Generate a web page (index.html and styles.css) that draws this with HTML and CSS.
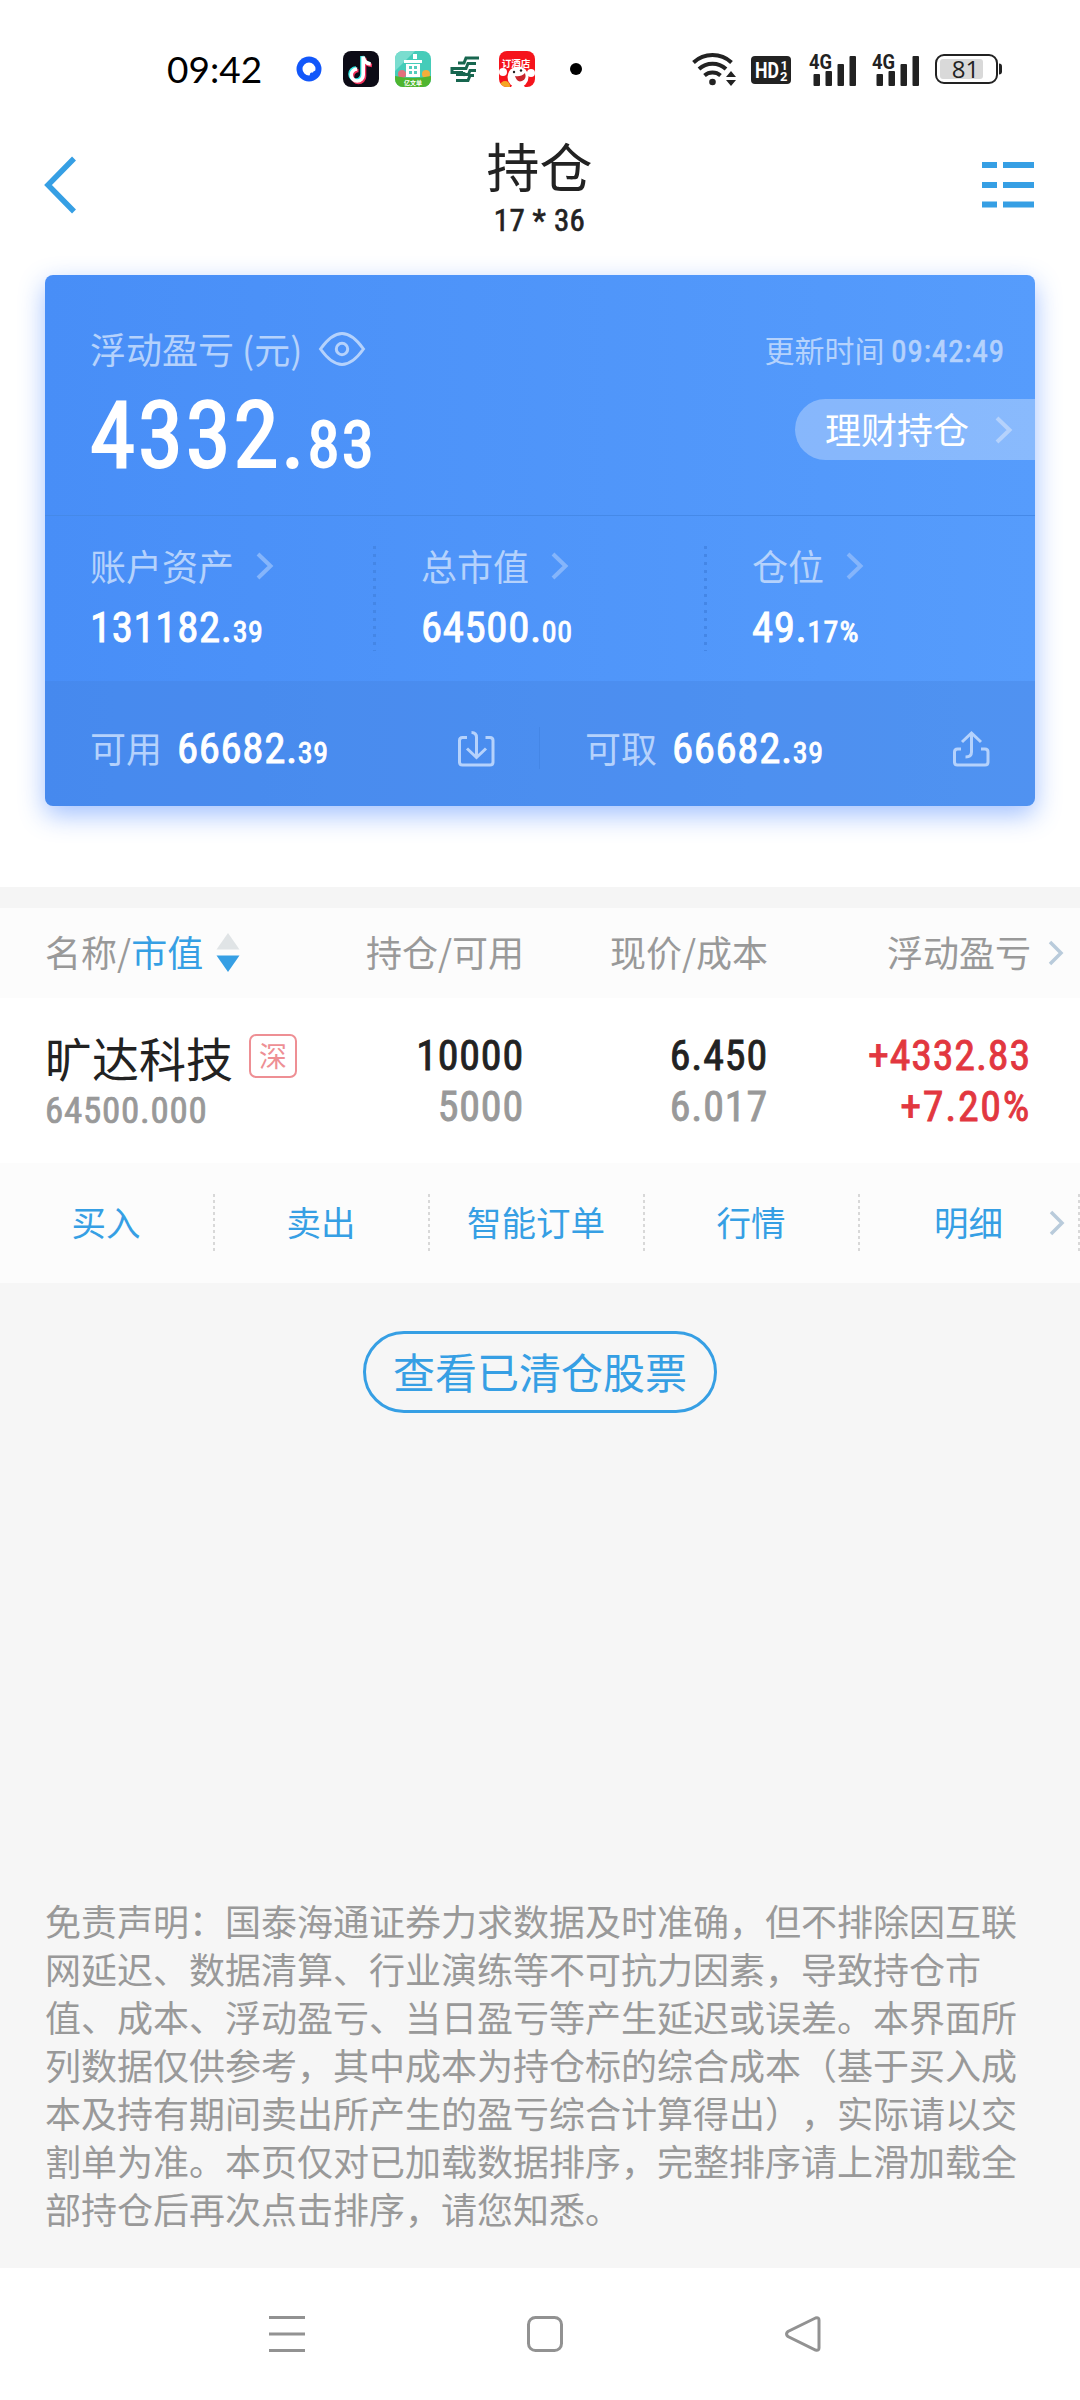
FILE: index.html
```html
<!DOCTYPE html>
<html lang="zh-CN">
<head>
    <meta charset="UTF-8">
    <meta name="viewport" content="width=device-width, initial-scale=1.0">
    <title>持仓</title>
    <link rel="stylesheet" href="styles.css">
</head>
<body>

<div class="status-bar">
    <span class="clock">09:42</span>
    <div class="app-icons">
        <svg width="26" height="26" viewBox="0 0 26 26"><circle cx="13" cy="13" r="12.500" fill="#1257fa"/><path d="M13 6.500a6.500 6.500 0 1 0 0 13q1 0 1-1.500q0-1.500 1.500-1.500h1.500q0-1.500 1.500-1.500q1 0 1-2a6.500 6.500 0 0 0-6.500-6.500z" fill="#fff"/></svg>
        <svg width="36" height="36" viewBox="0 0 36 36">
            <rect width="36" height="36" rx="8" fill="#0c0b16"/>
            <g fill="none" stroke-width="3.600">
                <path d="M19 5v18a6 6 0 1 1-6-6M19 5c.5 4.500 3 7 7.500 7.500" stroke="#2ee6e2"/>
                <path d="M21.500 7v18.500a6 6 0 1 1-6-6M21.500 7c.5 4.500 3 7 7.500 7.500" stroke="#f2315c"/>
                <path d="M20.200 5.500v18.500a6 6 0 1 1-6-6M20.200 5.500c.5 4.500 3 7 7.500 7.500" stroke="#fff"/>
            </g>
        </svg>
        <svg width="36" height="36" viewBox="0 0 36 36">
            <defs><clipPath id="tile"><rect width="36" height="36" rx="8"/></clipPath></defs>
            <g clip-path="url(#tile)">
                <rect width="36" height="36" fill="#45ccb9"/>
                <path d="M0 0h20L0 20z" fill="#7addcf"/>
                <circle cx="7" cy="23" r="4" fill="#e2707c"/>
                <circle cx="31" cy="23" r="4" fill="#f4ae3a"/>
                <path d="M9 9h18v3H9zM11 13h14v13H11zM18 3h4v5h-4z" fill="#fff"/>
                <path d="M14 15h3v3h-3zM19 15h3v3h-3zM14 20h3v3h-3zM19 20h3v3h-3z" fill="#52cdbd"/>
                <path d="M0 25q18 4 36 0v11H0z" fill="#4fb52f"/>
                <text class="tile-text" x="18" y="34" fill="#fff" font-size="6" text-anchor="middle">亿文单</text>
            </g>
        </svg>
        <svg class="post-icon" width="27" height="27" viewBox="0 0 27 27" fill="none" stroke="#17664f" stroke-width="3"><path d="M27 2H14l-2 5H6M24 7.500h-8l-2 5H0v4h11M24 14.500h-6l-1.500 4H4M12 16l-1 4M22 19.500h-4l-2 5H4"/></svg>
        <svg width="36" height="36" viewBox="0 0 36 36">
            <g clip-path="url(#tile)">
                <rect width="36" height="36" fill="#f5141c"/>
                <circle cx="4" cy="21" r="4" fill="#fff"/>
                <circle cx="32" cy="22" r="4" fill="#fff"/>
                <circle cx="19" cy="26" r="10.500" fill="#fff"/>
                <path d="M12 36q6-10 14 0z" fill="#fff"/>
                <path d="M16 25q6 1 10-3q2 6-3 8t-7-5z" fill="#c8262d"/>
                <circle cx="15" cy="21" r="1.200" fill="#222"/><circle cx="22" cy="19.500" r="1.200" fill="#222"/>
                <circle cx="6" cy="35" r="5" fill="#f5a623"/>
                <text class="tile-text" x="17" y="15.500" fill="#fff" font-size="9.500" text-anchor="middle">订酒店</text>
            </g>
        </svg>
        <span class="more-dot"></span>
    </div>
    <div class="signal-icons">
        <svg width="45" height="34" viewBox="0 0 45 34">
            <g fill="none" stroke="#222" stroke-width="4"><path d="M1.500 10.500a28 28 0 0 1 38 0"/><path d="M7 17a20 20 0 0 1 27 0"/><path d="M12.500 23.500a12.500 12.500 0 0 1 16 0"/></g>
            <circle cx="20.500" cy="30" r="3.300" fill="#222"/>
            <path d="M34 25l5-6 5 6zM34 28l5 6 5-6z" fill="#222"/>
        </svg>
        <svg class="hd" width="40" height="28" viewBox="0 0 40 28"><rect width="40" height="28" rx="4" fill="#222"/><g class="hd-text" fill="#fff"><text x="4" y="22" font-size="22" textLength="24" lengthAdjust="spacingAndGlyphs">HD</text><text x="29.500" y="13.500" font-size="13">1</text><text x="29" y="24.500" font-size="13">2</text></g></svg>
        <svg class="cell" width="46" height="33" viewBox="0 0 46 33"><text class="hd-text" x="-1" y="15.500" font-size="20" fill="#222" textLength="23" lengthAdjust="spacingAndGlyphs">4G</text><g fill="#222"><rect x="3.500" y="21" width="6.500" height="12" rx="1"/><rect x="15.500" y="18" width="6.500" height="15" rx="1"/><rect x="27.500" y="11" width="6.500" height="22" rx="1"/><rect x="39.500" y="3" width="6.500" height="30" rx="1"/></g></svg>
        <svg class="cell" width="46" height="33" viewBox="0 0 46 33"><text class="hd-text" x="-1" y="15.500" font-size="20" fill="#222" textLength="23" lengthAdjust="spacingAndGlyphs">4G</text><g fill="#222"><rect x="3.500" y="21" width="6.500" height="12" rx="1"/><rect x="15.500" y="18" width="6.500" height="15" rx="1"/><rect x="27.500" y="11" width="6.500" height="22" rx="1"/><rect x="39.500" y="3" width="6.500" height="30" rx="1"/></g></svg>
        <svg class="battery" width="68" height="30" viewBox="0 0 68 30"><rect x="5" y="5" width="43" height="20" rx="3" fill="#d9d9d9"/><rect x="1" y="1" width="61" height="28" rx="8" fill="none" stroke="#222" stroke-width="2"/><path d="M64 9.500q3 0 3 3v5q0 3-3 3z" fill="#222"/><text class="battery-text" x="30.500" y="23.500" font-size="24" text-anchor="middle" fill="#222">81</text></svg>
    </div>
</div>

<header>
    <svg class="back" width="32" height="56" viewBox="0 0 32 56"><path d="M30 1.500L4 28l26 26.500" fill="none" stroke="#369fe4" stroke-width="5.500"/></svg>
    <div class="title">
        <h1>持仓</h1>
        <p class="num">17 * 36</p>
    </div>
    <svg class="menu" width="52" height="47" viewBox="0 0 52 47" fill="#369fe4"><path d="M0 0h15v6H0zM21 0h31v6H21zM0 20h15v6H0zM21 20h31v6H21zM0 39.500h15v6H0zM21 39.500h31v6H21z"/></svg>
</header>

<section class="account">
    <div class="card">
        <div class="card-top">
            <div class="profit">
                <div class="profit-label">浮动盈亏<span class="unit">(元)</span>
                    <svg width="46" height="34" viewBox="0 0 46 34" fill="none" stroke="#b5d2fc" stroke-width="3"><path d="M1.500 17C9 6.500 16 1.500 23 1.500S37 6.500 44.500 17C37 27.500 30 32.500 23 32.500S9 27.500 1.500 17z"/><circle cx="23" cy="17" r="5.700"/></svg>
                </div>
                <div class="profit-value num">4332.<small>83</small></div>
            </div>
            <div class="card-right">
                <div class="update">更新时间 <span class="num">09:42:49</span></div>
                <a class="wealth"><span>理财持仓</span><svg width="17" height="28" viewBox="0 0 17 28"><path d="M2 2l12.500 12L2 26" fill="none" stroke="#b5d2fc" stroke-width="4"/></svg></a>
            </div>
        </div>
        <div class="stats">
            <div class="stat">
                <div class="stat-label">账户资产<svg width="17" height="28" viewBox="0 0 17 28"><path d="M2 2l12.500 12L2 26"/></svg></div>
                <div class="stat-value num">131182.<small>39</small></div>
            </div>
            <div class="stat">
                <div class="stat-label">总市值<svg width="17" height="28" viewBox="0 0 17 28"><path d="M2 2l12.500 12L2 26"/></svg></div>
                <div class="stat-value num">64500.<small>00</small></div>
            </div>
            <div class="stat">
                <div class="stat-label">仓位<svg width="17" height="28" viewBox="0 0 17 28"><path d="M2 2l12.500 12L2 26"/></svg></div>
                <div class="stat-value num">49.<small class="percent">17%</small></div>
            </div>
        </div>
        <div class="funds">
            <div class="fund">
                <span class="fund-label">可用</span>
                <span class="stat-value num">66682.<small>39</small></span>
                <svg width="37" height="36" viewBox="0 0 37 36"><path d="M9 6.500H4.500q-3 0-3 3V31q0 3 3 3H32q3 0 3-3V9.500q0-3-3-3h-4.500M13.500 1.500q5 0 5 5V26M9 17.500l9.500 9 9.500-9"/></svg>
            </div>
            <div class="fund">
                <span class="fund-label">可取</span>
                <span class="stat-value num">66682.<small>39</small></span>
                <svg width="37" height="36" viewBox="0 0 37 36"><path d="M8 18H4.500q-3 0-3 3v10q0 3 3 3H32q3 0 3-3V21q0-3-3-3h-4M12.500 26q6 0 6-5V3M9 11l9.500-9 9.500 9"/></svg>
            </div>
        </div>
    </div>
</section>

<div class="list-head">
    <div class="col-name">名称/<b>市值</b><svg width="24" height="39" viewBox="0 0 24 39"><path d="M12 0l11.500 16.500H.5z" fill="#e0e4e6"/><path d="M12 39L.5 22.500h23z" fill="#369fe4"/></svg></div>
    <div class="col-hold">持仓/可用</div>
    <div class="col-price">现价/成本</div>
    <div class="col-profit">浮动盈亏</div>
    <svg class="more" width="16" height="26" viewBox="0 0 16 26"><path d="M2 2l11 11L2 24"/></svg>
</div>

<div class="stock">
    <div class="col-name">
        <div class="stock-name">旷达科技<span class="tag">深</span></div>
        <div class="stock-amount num">64500.000</div>
    </div>
    <div class="col-hold num">10000<br><span class="gray">5000</span></div>
    <div class="col-price num">6.450<br><span class="gray">6.017</span></div>
    <div class="col-profit num red">+4332.83<br><span class="percent">+7.20%</span></div>
</div>

<div class="actions">
    <a>买入</a>
    <a>卖出</a>
    <a>智能订单</a>
    <a>行情</a>
    <a>明细</a>
    <svg class="more" width="16" height="26" viewBox="0 0 16 26"><path d="M2 2l11 11L2 24"/></svg>
</div>

<button class="cleared-btn">查看已清仓股票</button>

<p class="disclaimer">免责声明：国泰海通证券力求数据及时准确，但不排除因互联<br>网延迟、数据清算、行业演练等不可抗力因素，导致持仓市<br>值、成本、浮动盈亏、当日盈亏等产生延迟或误差。本界面所<br>列数据仅供参考，其中成本为持仓标的综合成本（基于买入成<br>本及持有期间卖出所产生的盈亏综合计算得出），实际请以交<br>割单为准。本页仅对已加载数据排序，完整排序请上滑加载全<br>部持仓后再次点击排序，请您知悉。</p>

<nav class="system-nav">
    <svg width="36" height="36" viewBox="0 0 36 36"><path d="M0 1.500h36M0 18h36M0 34.500h36"/></svg>
    <svg width="36" height="36" viewBox="0 0 36 36"><rect x="1.500" y="1.500" width="33" height="33" rx="7"/></svg>
    <svg width="36" height="36" viewBox="0 0 36 36"><path d="M30.500 2L3 15.500q-3 2.500 0 5L30.500 34q3.500 1 3.500-2V4q0-3-3.500-2z"/></svg>
</nav>

</body>
</html>
```
FILE: styles.css
```css
* {
    box-sizing: border-box;
}
body {
    width: 1080px;
    height: 2400px;
    margin: 0;
    background-color: #f6f6f6;
    color: #222;
    font-family: "Noto Sans CJK SC", sans-serif;
    font-weight: 400;
    font-size: 36px;
    display: flex;
    flex-direction: column;
    text-spacing-trim: space-all;
    overflow: hidden;
}
svg {
    display: block;
    flex: none;
    overflow: visible;
}
h1, p {
    margin: 0;
    font-weight: inherit;
}
/* condensed digits, slightly thickened */
.num {
    font-family: Roboto, "Noto Sans CJK SC", sans-serif;
    font-weight: 400;
    font-stretch: 75%;
    letter-spacing: 0.013em;
    -webkit-text-stroke: 0.02em currentColor;
}
.num .percent {
    letter-spacing: 0.04em;
}

/* status bar */
.status-bar {
    height: 138px;
    flex: none;
    background-color: #fff;
    display: flex;
    align-items: center;
    padding: 0 77px 0 167px;
}
.clock {
    width: 129px;
    margin-top: -2px;
    font-family: Lato, sans-serif;
    font-weight: 400;
    font-size: 37px;
    color: #000;
}
.app-icons {
    display: flex;
    align-items: center;
    gap: 16px;
}
.app-icons svg:first-child {
    margin-right: 5px;
}
.post-icon {
    margin: 0 4px 0 5px;
}
.tile-text {
    font-weight: 700;
}
.more-dot {
    width: 12px;
    height: 12px;
    margin-left: 19px;
    border-radius: 50%;
    background-color: #000;
}
.signal-icons {
    display: flex;
    align-items: center;
    margin-left: auto;
}
.hd {
    margin: 2px 19px 0 14px;
}
.hd-text {
    font-family: Roboto, sans-serif;
    font-weight: 700;
}
.cell {
    margin-right: 17px;
}
.battery {
    margin-left: -1px;
}
.battery-text {
    font-family: "Open Sans", sans-serif;
    font-weight: 400;
}

/* page header */
header {
    height: 137px;
    flex: none;
    background-color: #fff;
    display: flex;
    justify-content: space-between;
    align-items: flex-start;
    padding: 0 46px 0 44px;
}
.back {
    margin-top: 19px;
}
.title {
    margin-left: 21px;
    text-align: center;
}
.title h1 {
    font-size: 53px;
    line-height: 60px;
    margin-top: -3px;
}
.title p {
    font-size: 31px;
    line-height: 40px;
    margin-top: 6px;
}
.menu {
    margin-top: 24px;
}

/* account card */
.account {
    height: 612px;
    flex: none;
    background-color: #fff;
    padding: 0 45px;
}
.card {
    height: 531px;
    border-radius: 8px;
    background-image: linear-gradient(to right, #488ef7, #569cfc);
    box-shadow: 0 9px 26px rgba(60, 125, 255, 0.48);
    color: #fff;
    display: flex;
    flex-direction: column;
}
.card-top {
    height: 241px;
    border-bottom: 1px solid #4589e8;
    display: flex;
    justify-content: space-between;
    padding-left: 45px;
}
.profit-label, .stat-label, .update, .fund-label {
    color: #b5d2fc;
}
.profit-label {
    display: flex;
    align-items: center;
    height: 54px;
    margin-top: 46px;
}
.profit-label svg {
    margin-top: 2px;
}
.unit {
    margin: 0 17px 0 8px;
}
.profit-value {
    font-size: 92px;
    line-height: 100px;
    margin-top: 11px;
    letter-spacing: 0.025em;
}
.profit-value small {
    font-size: 65px;
}
.card-right {
    display: flex;
    flex-direction: column;
    align-items: flex-end;
}
.update {
    margin: 52px 30px 0 0;
    height: 44px;
    line-height: 44px;
    font-size: 30px;
}
.update .num {
    font-size: 31px;
    letter-spacing: 0.03em;
}
.wealth {
    display: flex;
    align-items: center;
    justify-content: space-between;
    width: 240px;
    height: 61px;
    margin-top: 28px;
    padding: 0 23px 0 30px;
    border-radius: 31px 0 0 31px;
    background-color: rgba(255, 255, 255, 0.3);
}
.wealth span {
    padding-bottom: 3px;
}
.stats {
    height: 165px;
    display: flex;
}
.stat {
    width: 331px;
    flex: none;
    padding: 22px 0 0 45px;
    background: repeating-linear-gradient(to bottom, #4486e6 0, #4486e6 3px, transparent 3px, transparent 8px) no-repeat 328px 30px / 3px 105px;
}
.stat:last-child {
    width: 328px;
    background: none;
}
.stat-label {
    display: flex;
    align-items: center;
    height: 54px;
}
.stat-label svg {
    margin: 1px 0 0 22px;
    fill: none;
    stroke: #85b5fb;
    stroke-width: 4px;
}
.stat-value {
    font-size: 43px;
    line-height: 50px;
}
.stat-value small {
    font-size: 30px;
}
.stat .stat-value {
    margin-top: 10px;
}
.funds {
    flex: 1;
    display: flex;
    border-radius: 0 0 8px 8px;
    background-color: rgba(70, 130, 220, 0.35);
}
.fund {
    width: 495px;
    display: flex;
    align-items: center;
    padding: 10px 45px 0;
    background: linear-gradient(#4486e6, #4486e6) no-repeat right 46px / 1px 42px;
}
.fund:last-child {
    background: none;
}
.fund-label {
    margin: -4px 15px 0 0;
}
.fund .stat-value {
    padding-top: 4px;
}
.fund svg {
    margin-left: auto;
    fill: none;
    stroke: #b5d2fc;
    stroke-width: 3px;
}

/* holdings list */
.list-head {
    height: 111px;
    flex: none;
    border-top: 21px solid #f5f5f5;
    background-color: #fcfcfc;
    color: #999;
    display: flex;
    align-items: center;
    padding-bottom: 5px;
}
.list-head b {
    color: #369fe4;
    font-weight: inherit;
}
.col-name {
    width: 281px;
    padding-left: 45px;
}
.list-head .col-name {
    display: flex;
    align-items: center;
}
.list-head .col-name svg {
    margin: 4px 0 0 13px;
}
.col-hold {
    width: 243px;
    text-align: right;
}
.col-price {
    width: 244px;
    text-align: right;
}
.col-profit {
    width: 263px;
    text-align: right;
}
.more {
    margin-left: 17px;
    fill: none;
    stroke: #b9cbdb;
    stroke-width: 3.500px;
}
.list-head .more {
    margin-top: 4px;
}
.stock {
    height: 165px;
    flex: none;
    background-color: #fff;
    display: flex;
    font-size: 42px;
    line-height: 51px;
    padding-top: 32px;
}
.stock .num {
    letter-spacing: 0.02em;
}
.stock-name {
    display: flex;
    align-items: center;
    height: 60px;
    margin-top: -4px;
    font-size: 47px;
    white-space: nowrap;
}
.tag {
    width: 48px;
    height: 44px;
    flex: none;
    margin: -1px 0 0 16px;
    border: 2px solid #ee8f94;
    border-radius: 7px;
    color: #ee8f94;
    font-size: 28px;
    line-height: 38px;
    text-align: center;
}
.stock-amount {
    font-size: 37px;
    line-height: 42px;
    margin-top: 4px;
    color: #999;
}
.gray {
    color: #999;
}
.red {
    color: #e2373f;
}
.actions {
    height: 120px;
    flex: none;
    background-color: #fcfcfc;
    display: flex;
    align-items: center;
    position: relative;
}
.actions a {
    width: 215px;
    height: 58px;
    padding-right: 3px;
    line-height: 55px;
    font-size: 34.500px;
    color: #369fe4;
    text-align: center;
    background: repeating-linear-gradient(to bottom, #d8d8d8 0, #d8d8d8 3px, transparent 3px, transparent 6px) no-repeat right top / 2px 58px;
}
.actions a:nth-child(5) {
    width: 220px;
}
.actions .more {
    position: absolute;
    right: 15px;
}

.cleared-btn {
    flex: none;
    align-self: center;
    width: 354px;
    height: 82px;
    margin-top: 48px;
    padding: 0 0 2px;
    border: 3px solid #369fe4;
    border-radius: 41px;
    background: none;
    color: #369fe4;
    font: inherit;
    font-size: 42px;
    line-height: 74px;
}
.disclaimer {
    margin: auto 45px 36px;
    color: #999;
    line-height: 48px;
    white-space: nowrap;
}

/* android navigation keys */
.system-nav {
    height: 132px;
    flex: none;
    background-color: #fff;
    display: flex;
    align-items: center;
    justify-content: space-between;
    padding: 0 259px 0 269px;
}
.system-nav svg {
    fill: none;
    stroke: #929292;
    stroke-width: 3px;
}
```
